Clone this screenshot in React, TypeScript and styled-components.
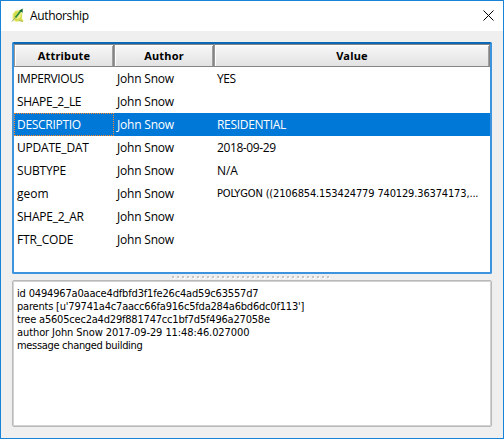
import React from "react";
import styled, { createGlobalStyle, css } from "styled-components";

const GlobalStyle = createGlobalStyle`
  * { box-sizing: border-box; }
  html, body { margin: 0; padding: 0; }
  body { background: #fff; color: #000; overflow: hidden; }
`;

const Dialog = styled.main`
  width: 504px;
  height: 439px;
  display: flex;
  flex-direction: column;
  background: #efefef;
  border: 1px solid #1883d7;
`;

const TitleBar = styled.header`
  height: 30px;
  flex: none;
  display: flex;
  align-items: center;
  padding: 0 9px 0 9px;
  background: #fff;
`;

const Title = styled.h1`
  flex: 1;
  margin: 0 0 0 4px;
  font: 400 12px/16px "Open Sans", "Noto Sans", sans-serif;
  letter-spacing: -0.35px;
`;

const CloseButton = styled.button`
  display: flex;
  padding: 0;
  margin-bottom: 1px;
  border: 0;
  background: none;
`;

const Content = styled.div`
  flex: 1;
  min-height: 0;
  display: flex;
  flex-direction: column;
  padding: 11px;
`;

const Grid = styled.section`
  height: 232px;
  flex: none;
  background: #fff;
  border: 2px solid #3c94de;
  border-top-color: #0b68b5;
  border-radius: 2px;
`;

const columns = css`
  display: grid;
  grid-template-columns: 100px 100px 276px;
`;

const HeaderRow = styled.div`
  ${columns}
  height: 23px;
`;

const HeaderCell = styled.div`
  display: flex;
  align-items: center;
  justify-content: center;
  border: 1px solid #858585;
  border-left-color: #969696;
  box-shadow: inset 1px 1px 0 #fff, inset -1px 0 0 #a0a0a0;
  background: linear-gradient(#f8f8f8, #e2e2e2);
  font: 700 11px/14px "Noto Sans", "Open Sans", sans-serif;
  letter-spacing: 0.2px;
  padding-top: 1px;
`;

const Row = styled.div<{ $selected?: boolean }>`
  ${columns}
  height: 23px;
  color: ${(p) => (p.$selected ? "#fff" : "#000")};
  background: ${(p) => (p.$selected ? "#0078d7" : "transparent")};
`;

const Cell = styled.div<{ $focused?: boolean; $compact?: boolean; $spacing?: number }>`
  padding: 0 2px;
  border: 1px ${(p) => (p.$focused ? "dotted #ff8728" : "solid transparent")};
  white-space: nowrap;
  overflow: hidden;
  font: ${(p) =>
    p.$compact
      ? '400 11px/21px "DejaVu Sans Condensed", "DejaVu Sans", sans-serif'
      : '400 12px/21px "Open Sans", "Noto Sans", sans-serif'};
  font-stretch: ${(p) => (p.$compact ? "condensed" : "normal")};
  letter-spacing: ${(p) => p.$spacing ?? 0}px;
`;

const Splitter = styled.div`
  height: 6px;
  flex: none;
  display: flex;
  justify-content: center;
  align-items: center;
`;

const Details = styled.section`
  height: 147px;
  flex: none;
  padding: 6px 4px;
  background: #fff;
  border: 1px solid #b9b9b9;
  border-radius: 2px;
  box-shadow: inset 0 0 0 1px #d2d2d2;
`;

const Line = styled.p<{ $spacing: number }>`
  margin: 0;
  white-space: pre;
  font: 400 11px/13px "DejaVu Sans Condensed", "DejaVu Sans", sans-serif;
  font-stretch: condensed;
  letter-spacing: ${(p) => p.$spacing}px;
`;

const AppIcon = () => (
  <svg width="16" height="16" viewBox="0 0 16 16">
    <path d="M5.5 2.5 10 2 12.5 5 12 10 14 13.5 10.5 13 6 14 2.5 11.5 2.5 6Z" fill="#eeee86" />
    <path d="M5.5 3.5 9 3 6 7 5.5 10 8 11 10.5 9.5 11 6.5 12 7 11.5 11 13 13.5 10 12.7 6 13 3.5 10.5 3.5 6Z" fill="#d4dc49" />
    <path d="M9 12.5l4 1" stroke="#a9b655" />
    <path d="M5.5 9.5 11 2.5" stroke="#278b38" strokeWidth="1.8" />
    <path d="M12.7.5v4.2L9.3 2.6Z" fill="#12672c" />
    <path d="m2 13.5 4-4.5" stroke="#8f9f72" />
  </svg>
);

const GripDots = () => (
  <svg width="160" height="4" viewBox="0 0 160 4" shapeRendering="crispEdges">
    {Array.from({ length: 32 }, (_, i) => (
      <g key={i}>
        <path d={`M${i * 5 + 1} 2h2v2h-2z`} fill="#fff" />
        <path d={`M${i * 5} 1h2v2h-2z`} fill="#c6c6c6" />
      </g>
    ))}
  </svg>
);

const attributes = [
  { name: "IMPERVIOUS", spacing: -0.38, value: "YES", valueSpacing: -0.4 },
  { name: "SHAPE_2_LE", spacing: -0.3, value: "" },
  { name: "DESCRIPTIO", spacing: -0.3, value: "RESIDENTIAL", valueSpacing: -0.3 },
  { name: "UPDATE_DAT", spacing: -0.2, value: "2018-09-29", valueSpacing: -0.4 },
  { name: "SUBTYPE", spacing: -0.2, value: "N/A", valueSpacing: -0.1 },
  { name: "geom", spacing: 0, value: "POLYGON ((2106854.153424779 740129.36374173,...", valueSpacing: -0.15 },
  { name: "SHAPE_2_AR", spacing: -0.25, value: "" },
  { name: "FTR_CODE", spacing: -0.2, value: "" },
];

const details = [
  { text: "id 0494967a0aace4dfbfd3f1fe26c4ad59c63557d7", spacing: -0.17 },
  { text: "parents [u'79741a4c7aacc66fa916c5fda284a6bd6dc0f113']", spacing: -0.2 },
  { text: "tree a5605cec2a4d29f881747cc1bf7d5f496a27058e", spacing: -0.2 },
  { text: "author John Snow 2017-09-29 11:48:46.027000", spacing: -0.09 },
  { text: "message changed building", spacing: -0.32 },
];

export default function App() {
  return (
    <>
      <GlobalStyle />
      <Dialog>
        <TitleBar>
          <AppIcon />
          <Title>Authorship</Title>
          <CloseButton aria-label="Close">
            <svg width="11" height="11" viewBox="0 0 11 11" fill="none" stroke="#000">
              <path d="m.5.5 10 10M10.5.5l-10 10" />
            </svg>
          </CloseButton>
        </TitleBar>
        <Content>
          <Grid>
            <HeaderRow>
              <HeaderCell>Attribute</HeaderCell>
              <HeaderCell>Author</HeaderCell>
              <HeaderCell>Value</HeaderCell>
            </HeaderRow>
            {attributes.map((a) => {
              const selected = a.name === "DESCRIPTIO";
              return (
                <Row key={a.name} $selected={selected}>
                  <Cell $focused={selected} $spacing={a.spacing}>{a.name}</Cell>
                  <Cell $spacing={-0.2}>John Snow</Cell>
                  <Cell $compact={a.name === "geom"} $spacing={a.valueSpacing}>{a.value}</Cell>
                </Row>
              );
            })}
          </Grid>
          <Splitter>
            <GripDots />
          </Splitter>
          <Details>
            {details.map((d) => (
              <Line key={d.text} $spacing={d.spacing}>{d.text}</Line>
            ))}
          </Details>
        </Content>
      </Dialog>
    </>
  );
}
